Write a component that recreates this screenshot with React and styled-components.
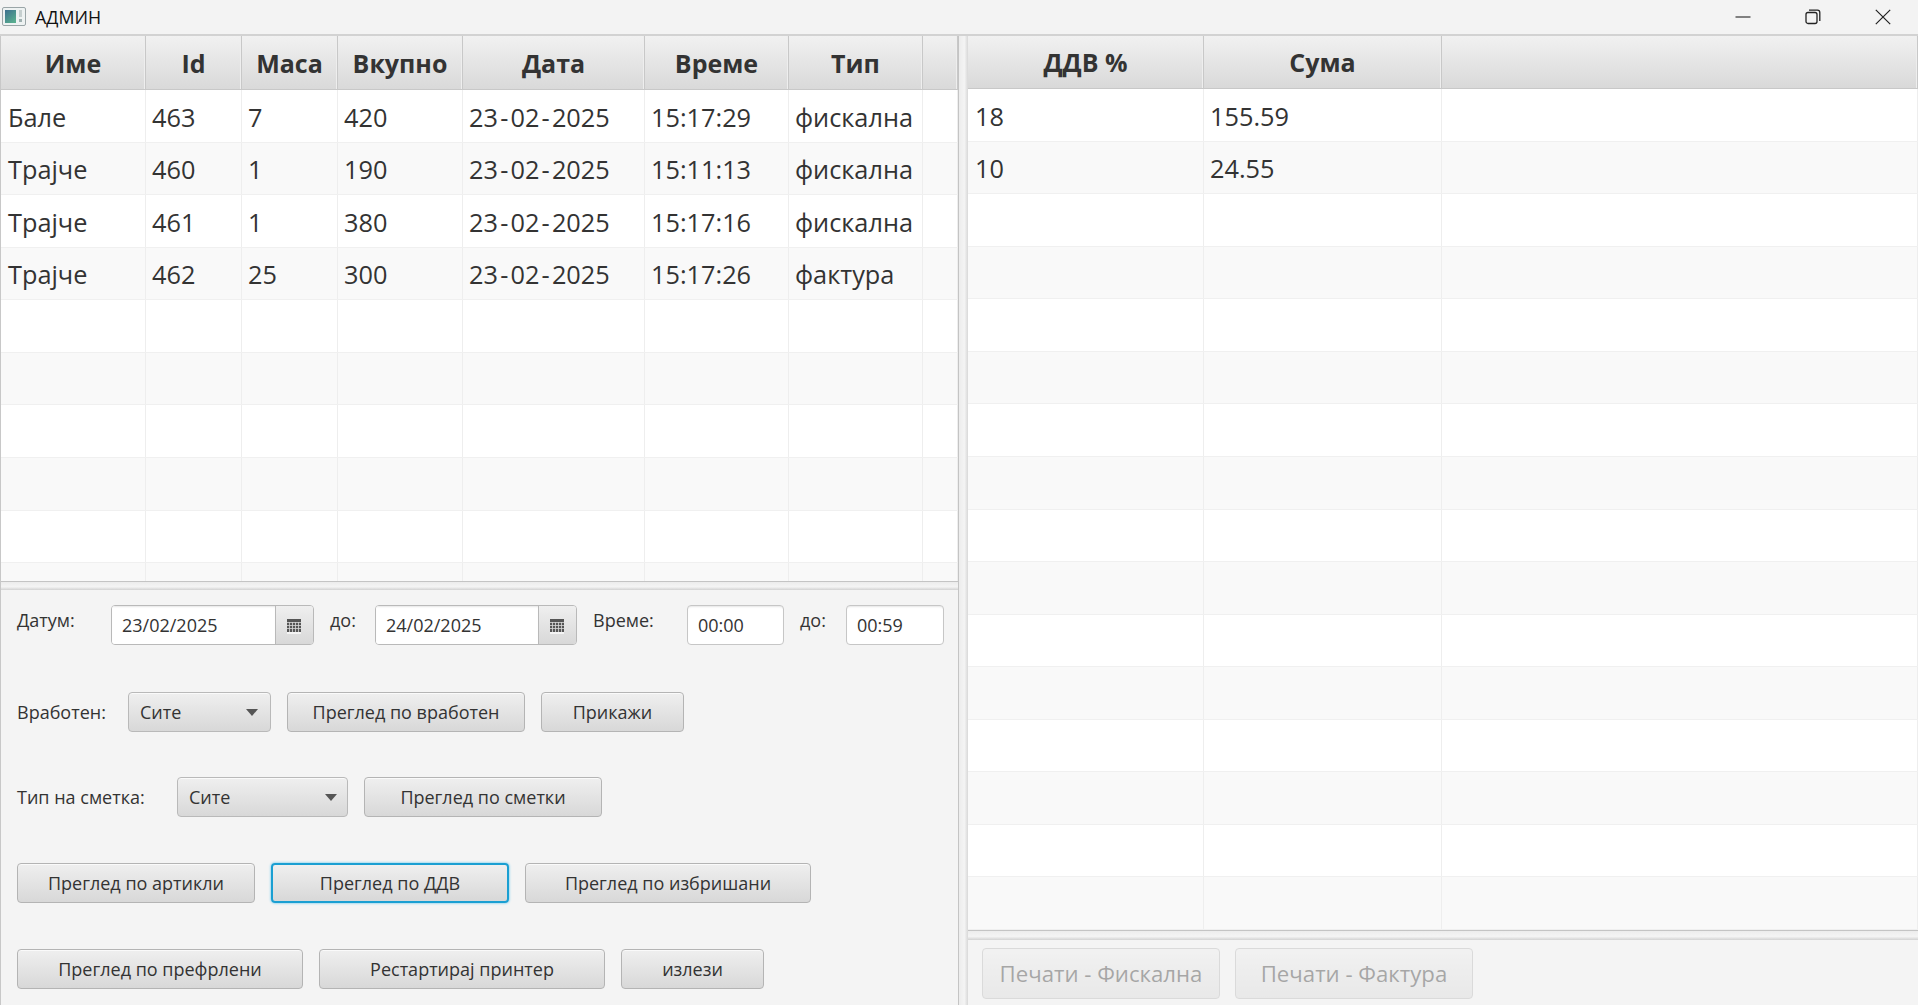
import styled, { createGlobalStyle } from "styled-components";

const leftCols = [145, 96, 96, 125, 182, 144, 134, 35];
const rightCols = [236, 238, 476];

const leftHead = ["Име", "Id", "Маса", "Вкупно", "Дата", "Време", "Тип", ""];
const rightHead = ["ДДВ %", "Сума", ""];

const leftData = [
  ["Бале", "463", "7", "420", "23-02-2025", "15:17:29", "фискална", ""],
  ["Трајче", "460", "1", "190", "23-02-2025", "15:11:13", "фискална", ""],
  ["Трајче", "461", "1", "380", "23-02-2025", "15:17:16", "фискална", ""],
  ["Трајче", "462", "25", "300", "23-02-2025", "15:17:26", "фактура", ""],
];
const rightData = [
  ["18", "155.59", ""],
  ["10", "24.55", ""],
];

function fillRows(data, total, width) {
  const rows = [...data];
  while (rows.length < total) rows.push(Array(width).fill(""));
  return rows;
}

// dates have wider dashes than the font gives
function cellText(text) {
  if (!/^\d\d-\d\d-\d{4}$/.test(text)) return text;
  const [d, m, y] = text.split("-");
  return (
    <>
      {d}
      <Dash>-</Dash>
      {m}
      <Dash>-</Dash>
      {y}
    </>
  );
}

function DataTable({ cols, head, rows, headHeight }) {
  const template = cols.map((c) => c + "px").join(" ");
  return (
    <TableWrap>
      <HeadRow $cols={template} $height={headHeight}>
        {head.map((h, i) => (
          <HeadCell key={i}>{h}</HeadCell>
        ))}
      </HeadRow>
      <Body>
        {rows.map((row, i) => (
          <BodyRow key={i} $cols={template} $odd={i % 2 === 1}>
            {row.map((c, j) => (
              <BodyCell key={j}>{cellText(c)}</BodyCell>
            ))}
          </BodyRow>
        ))}
      </Body>
    </TableWrap>
  );
}

function CalendarIcon() {
  return (
    <svg width="14" height="15" viewBox="0 0 14 15">
      <rect x="0" y="0" width="14" height="13" fill="#555" />
      <path
        d="M0 3.5H14M0 6.5H14M0 9.5H14M2.5 3V13M5.5 3V13M8.5 3V13M11.5 3V13"
        stroke="#d8d8d8"
        strokeWidth="0.8"
      />
      <rect x="0" y="13" width="14" height="2" fill="#f4f4f4" />
    </svg>
  );
}

function AppIcon() {
  return (
    <svg width="24" height="20" viewBox="0 0 24 20">
      <defs>
        <linearGradient id="appGrad" x1="0" y1="0" x2="0.7" y2="1">
          <stop offset="0" stopColor="#3d6f8f" />
          <stop offset="1" stopColor="#58ad8f" />
        </linearGradient>
      </defs>
      <rect x="0.5" y="0.5" width="23" height="18" rx="1.5" fill="#eef2f2" stroke="#9aa5a7" />
      <rect x="3" y="3" width="11" height="13" fill="url(#appGrad)" />
      <rect x="17" y="3" width="3" height="7" fill="#c6cfcf" />
      <rect x="17" y="12" width="3" height="3" fill="#9fb0b0" />
    </svg>
  );
}

function DateField({ value, width }) {
  return (
    <DateBox $w={width}>
      <DateValue>{value}</DateValue>
      <DateButton>
        <CalendarIcon />
      </DateButton>
    </DateBox>
  );
}

function Combo({ width, arrowGap }) {
  return (
    <ComboBox $w={width} $arrowGap={arrowGap}>
      <span>Сите</span>
      <ComboArrow />
    </ComboBox>
  );
}

export default function App() {
  return (
    <>
      <GlobalStyle />
      <Window>
        <TitleBar>
          <TitleLeft>
            <AppIcon />
            <TitleText>АДМИН</TitleText>
          </TitleLeft>
          <WinControls>
            <WinButton>
              <svg width="16" height="16" viewBox="0 0 16 16">
                <path d="M0.5 8H15.5" stroke="#222" strokeWidth="1.1" />
              </svg>
            </WinButton>
            <WinButton>
              <svg width="16" height="16" viewBox="0 0 16 16" fill="none" stroke="#222" strokeWidth="1.3">
                <rect x="1" y="3.5" width="11" height="11" rx="2" />
                <path d="M4 1.2H12.5C13.8 1.2 14.8 2.2 14.8 3.5V12" />
              </svg>
            </WinButton>
            <WinButton>
              <svg width="16" height="16" viewBox="0 0 16 16">
                <path d="M0.8 0.8L15.2 15.2M15.2 0.8L0.8 15.2" stroke="#222" strokeWidth="1.2" />
              </svg>
            </WinButton>
          </WinControls>
        </TitleBar>

        <Split>
          <LeftPane>
            <DataTable cols={leftCols} head={leftHead} rows={fillRows(leftData, 10, 8)} headHeight={54} />
            <HSplitter />
            <Form>
              <FormRow>
                <TopLabel $w={78}>Датум:</TopLabel>
                <DateField value="23/02/2025" width={203} />
                <TopLabel $w={29}>до:</TopLabel>
                <DateField value="24/02/2025" width={202} />
                <TopLabel $w={78}>Време:</TopLabel>
                <TimeField $w={97}>00:00</TimeField>
                <TopLabel $w={30}>до:</TopLabel>
                <TimeField $w={98}>00:59</TimeField>
              </FormRow>
              <FormRow $top={47}>
                <Label $w={95}>Вработен:</Label>
                <Combo width={143} arrowGap={12} />
                <Button $w={238}>Преглед по вработен</Button>
                <Button $w={143}>Прикажи</Button>
              </FormRow>
              <FormRow $top={45}>
                <Label $w={144}>Тип на сметка:</Label>
                <Combo width={171} arrowGap={10} />
                <Button $w={238}>Преглед по сметки</Button>
              </FormRow>
              <FormRow $top={46}>
                <Button $w={238}>Преглед по артикли</Button>
                <Button $w={238} $focused>
                  Преглед по ДДВ
                </Button>
                <Button $w={286}>Преглед по избришани</Button>
              </FormRow>
              <FormRow $top={46}>
                <Button $w={286}>Преглед по префрлени</Button>
                <Button $w={286}>Рестартирај принтер</Button>
                <Button $w={143}>излези</Button>
              </FormRow>
            </Form>
          </LeftPane>

          <VSplitter />

          <RightPane>
            <DataTable cols={rightCols} head={rightHead} rows={fillRows(rightData, 16, 3)} headHeight={53} />
            <HSplitter $h={10} />
            <PrintBar>
              <PrintButton disabled>Печати - Фискална</PrintButton>
              <PrintButton disabled>Печати - Фактура</PrintButton>
            </PrintBar>
          </RightPane>
        </Split>
      </Window>
    </>
  );
}

const GlobalStyle = createGlobalStyle`
  html, body {
    margin: 0;
    padding: 0;
    background: #f4f4f4;
  }
  * {
    box-sizing: border-box;
  }
`;

const Window = styled.div`
  width: 1918px;
  height: 1005px;
  display: flex;
  flex-direction: column;
  overflow: hidden;
  background: #f4f4f4;
  font-family: "Open Sans", "Noto Sans", sans-serif;
  color: #333;
`;

const TitleBar = styled.div`
  height: 36px;
  flex: none;
  display: flex;
  align-items: center;
  justify-content: space-between;
  background: #f3f3f3;
  border-bottom: 2px solid #d2d2d2;
`;

const TitleLeft = styled.div`
  display: flex;
  align-items: center;
  gap: 9px;
  padding-left: 2px;
`;

const TitleText = styled.span`
  font-size: 17.8px;
  color: #111;
`;

const WinControls = styled.div`
  display: flex;
  height: 33px;
`;

const WinButton = styled.div`
  width: 70px;
  display: flex;
  align-items: center;
  justify-content: center;
`;

const Split = styled.div`
  flex: 1;
  min-height: 0;
  display: flex;
`;

const LeftPane = styled.div`
  width: 959px;
  flex: none;
  display: flex;
  flex-direction: column;
  border-left: 1px solid #c8c8c8;
  border-right: 1px solid #c4c4c4;
`;

const RightPane = styled.div`
  flex: 1;
  min-width: 0;
  display: flex;
  flex-direction: column;
`;

const VSplitter = styled.div`
  width: 9px;
  flex: none;
  background: linear-gradient(to right, #ececec, #f4f4f4 60%, #d8d8d8);
`;

const HSplitter = styled.div`
  height: ${(p) => p.$h || 9}px;
  flex: none;
  border-top: 1px solid #c4c4c4;
  background: linear-gradient(to bottom, #ececec, #f4f4f4 60%, #d2d2d2);
`;

const TableWrap = styled.div`
  flex: 1;
  min-height: 0;
  display: flex;
  flex-direction: column;
  overflow: hidden;
  background: #fff;
`;

const HeadRow = styled.div`
  flex: none;
  height: ${(p) => p.$height}px;
  display: grid;
  grid-template-columns: ${(p) => p.$cols};
  background: linear-gradient(to bottom, #f1f1f1, #d9d9d9);
  border-bottom: 1px solid #c8c8c8;
`;

const HeadCell = styled.div`
  display: flex;
  align-items: center;
  justify-content: center;
  font-size: 25px;
  font-weight: 700;
  color: #333;
  border-right: 1px solid #c8c8c8;
  box-shadow: inset -1px 0 0 #eeeeee;
`;

const Body = styled.div`
  flex: 1;
  min-height: 0;
  overflow: hidden;
`;

const BodyRow = styled.div`
  height: 52.57px;
  display: grid;
  grid-template-columns: ${(p) => p.$cols};
  background: ${(p) => (p.$odd ? "#f9f9f9" : "#fff")};
  border-bottom: 1px solid #f0f0f0;
`;

const BodyCell = styled.div`
  display: flex;
  align-items: center;
  padding: 2px 0 0 6px;
  font-size: 25.3px;
  color: #333;
  white-space: nowrap;
  border-right: 1px solid #eeeeee;

  &:first-child {
    padding-left: 7px;
  }
`;

const Dash = styled.span`
  margin: 0 2.2px;
`;

const Form = styled.div`
  flex: none;
  height: 415px;
  padding: 15px 0 0 16px;
  display: flex;
  flex-direction: column;
`;

const FormRow = styled.div`
  display: flex;
  gap: 16px;
  height: 40px;
  flex: none;
  margin-top: ${(p) => p.$top || 0}px;
`;

const Label = styled.div`
  width: ${(p) => p.$w}px;
  flex: none;
  display: flex;
  align-items: center;
  font-size: 18px;
  color: #333;
  white-space: nowrap;
`;

const TopLabel = styled(Label)`
  align-items: flex-start;
  line-height: 30px;
`;

const Control = styled.div`
  height: 40px;
  flex: none;
  border: 1px solid #b9b9b9;
  border-radius: 4px;
  font-size: 18px;
  color: #333;
`;

const DateBox = styled(Control)`
  width: ${(p) => p.$w}px;
  display: flex;
  overflow: hidden;
`;

const DateValue = styled.div`
  flex: 1;
  display: flex;
  align-items: center;
  padding-left: 10px;
  background: #fff;
  box-shadow: inset 0 2px 2px -1px #e6e6e6;
`;

const DateButton = styled.div`
  width: 38px;
  flex: none;
  display: flex;
  align-items: center;
  justify-content: center;
  padding: 2px 1px 0 0;
  border-left: 1px solid #b9b9b9;
  background: linear-gradient(to bottom, #efefef, #d8d8d8);
`;

const TimeField = styled(Control)`
  width: ${(p) => p.$w}px;
  display: flex;
  align-items: center;
  padding-left: 10px;
  background: #fff;
  border-color: #c6c6c6;
  box-shadow: inset 0 2px 2px -1px #e6e6e6;
`;

const ComboBox = styled(Control)`
  width: ${(p) => p.$w}px;
  display: flex;
  align-items: center;
  justify-content: space-between;
  padding: 0 ${(p) => p.$arrowGap}px 0 11px;
  background: linear-gradient(to bottom, #efefef, #d8d8d8);
  box-shadow: inset 0 1px 0 #fafafa;
`;

const ComboArrow = styled.span`
  width: 0;
  height: 0;
  border-left: 6.5px solid transparent;
  border-right: 6.5px solid transparent;
  border-top: 7px solid #555;
`;

const Button = styled.button`
  width: ${(p) => p.$w}px;
  height: 40px;
  flex: none;
  padding: 0;
  font-family: inherit;
  font-size: 18px;
  color: #333;
  white-space: nowrap;
  background: linear-gradient(to bottom, #efefef, #d8d8d8);
  border: 1px solid ${(p) => (p.$focused ? "#1a9fd2" : "#b4b4b4")};
  border-width: ${(p) => (p.$focused ? "2px" : "1px")};
  border-radius: 4px;
  box-shadow: ${(p) => (p.$focused ? "0 0 2px 1px #a9dcf0" : "inset 0 1px 0 #fafafa")};
`;

const PrintBar = styled.div`
  flex: none;
  height: 65px;
  padding: 8px 0 0 14px;
  display: flex;
  gap: 15px;
`;

const PrintButton = styled.button`
  width: 238px;
  height: 51px;
  padding: 0;
  font-family: inherit;
  font-size: 22.2px;
  color: #333;
  white-space: nowrap;
  background: linear-gradient(to bottom, #efefef, #d8d8d8);
  border: 1px solid #b4b4b4;
  border-radius: 4px;
  opacity: 0.4;
`;
